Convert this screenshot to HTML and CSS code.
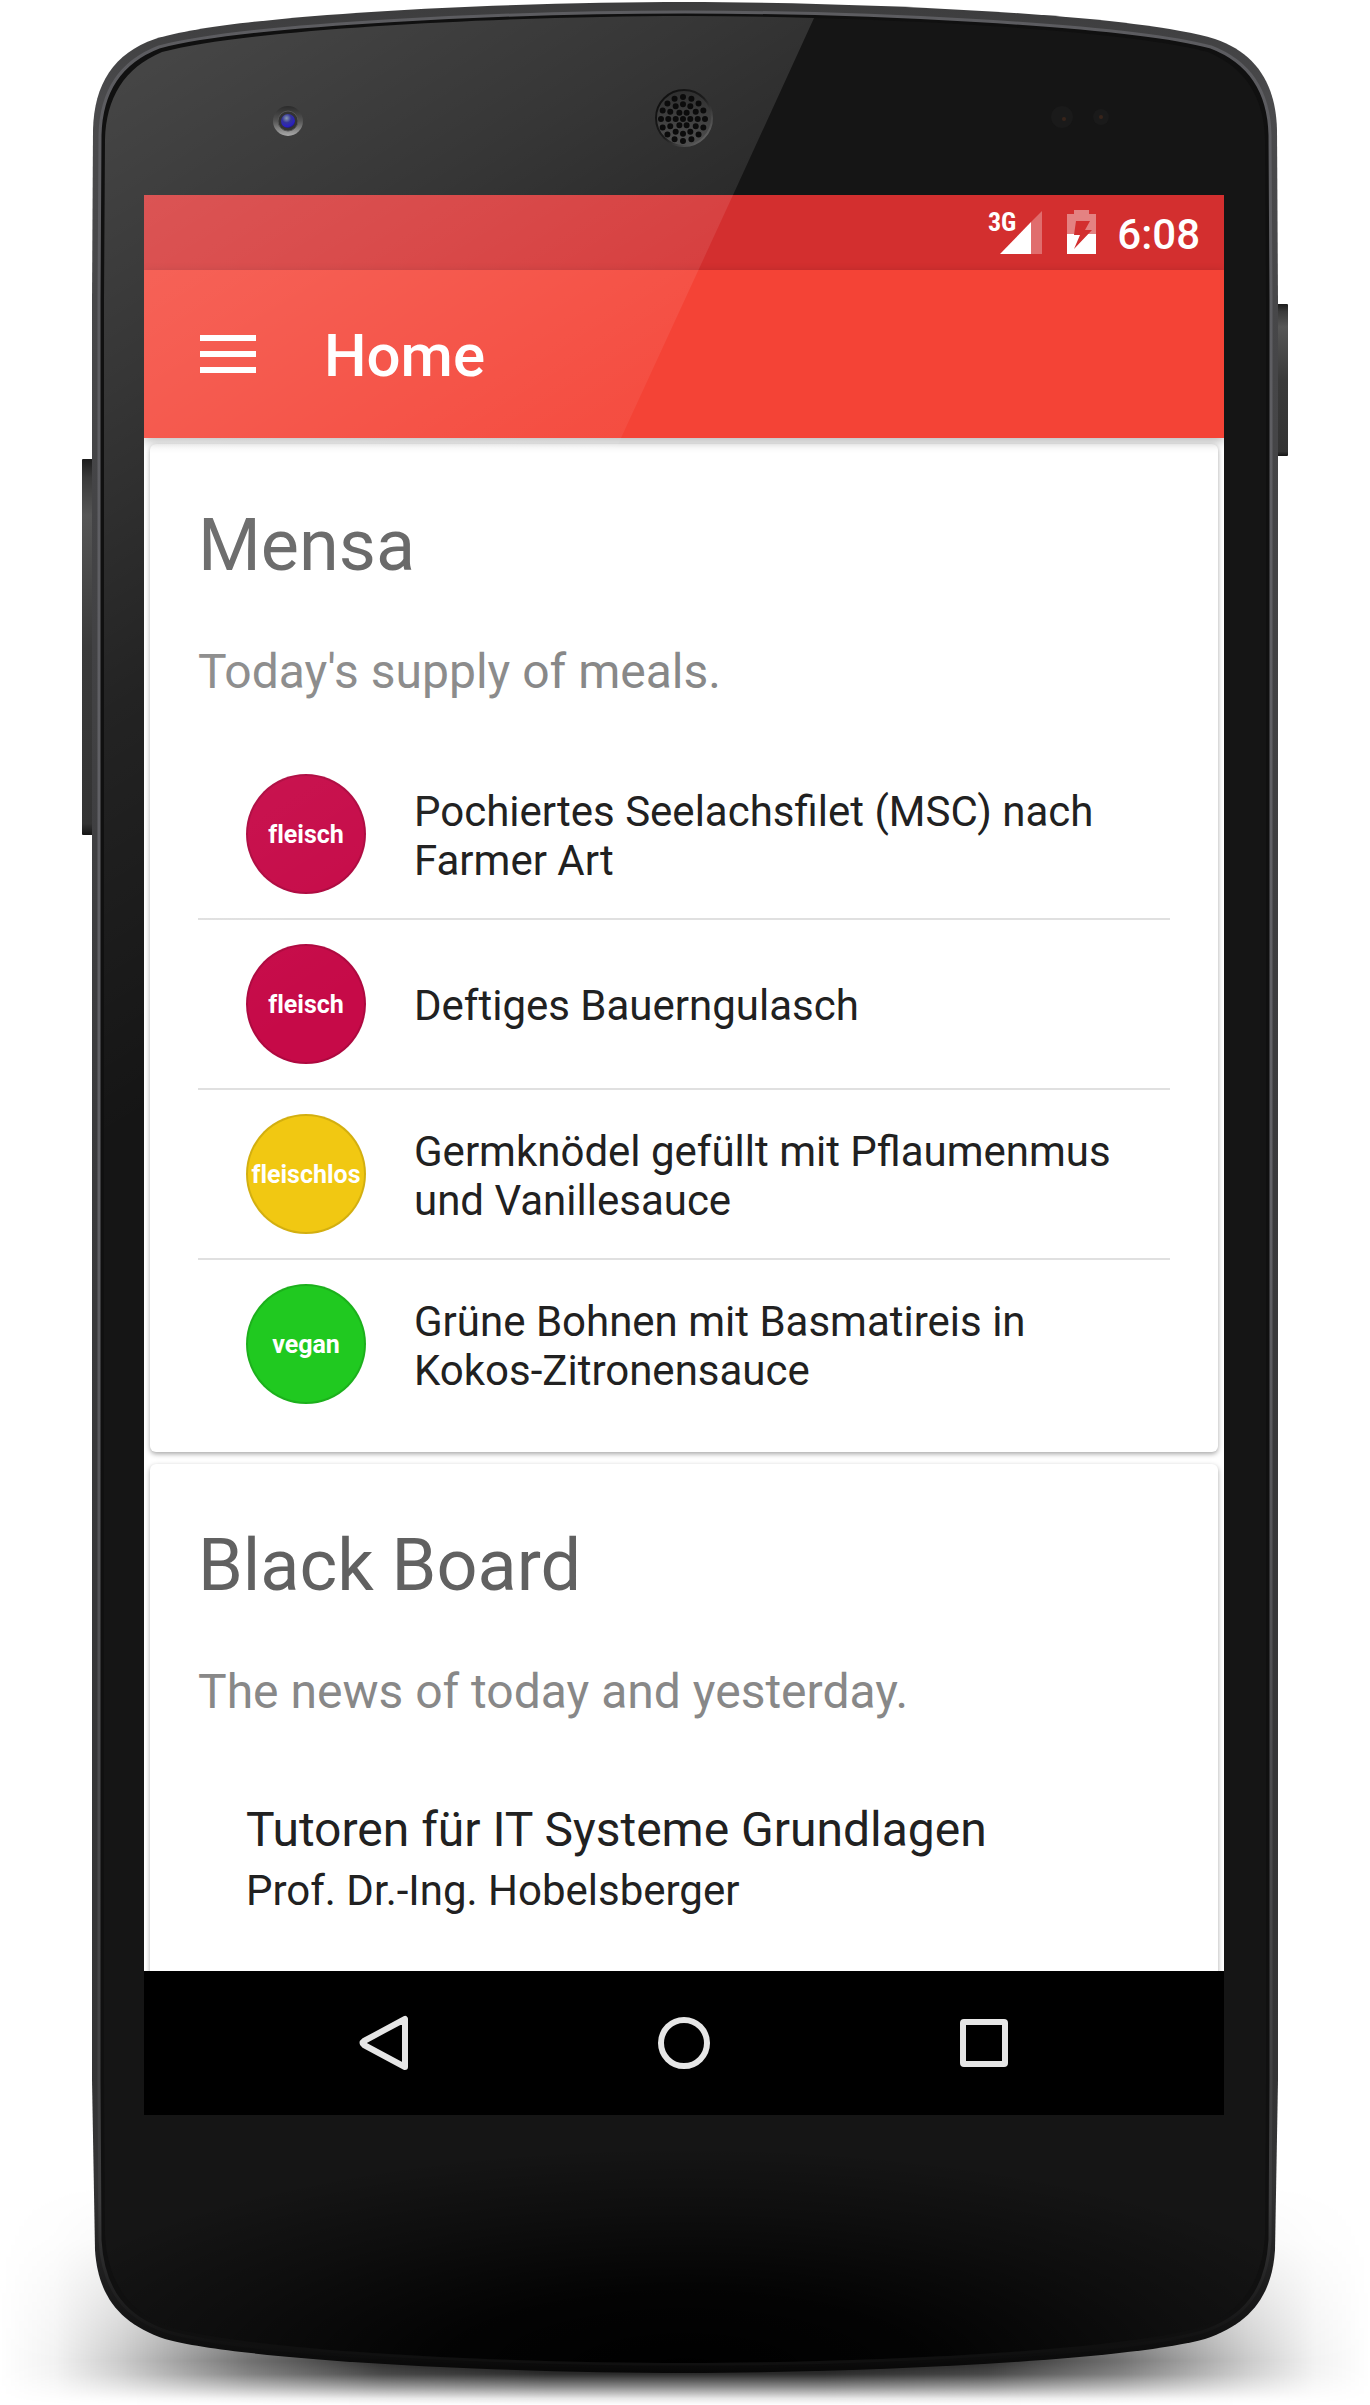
FILE: index.html
```
<!DOCTYPE html>
<html lang="en">
<head>
<meta charset="utf-8">
<meta name="viewport" content="width=device-width, initial-scale=1">
<title>Home</title>
<link rel="stylesheet" href="styles.css">
</head>
<body>
<div class="phone">
  <svg class="phone-layer" viewBox="0 0 1370 2405" preserveAspectRatio="none" aria-hidden="true">
    <defs>
      <linearGradient id="shadowX" x1="0" x2="1" y1="0" y2="0">
        <stop offset="0" stop-color="#000" stop-opacity="0"/>
        <stop offset=".04" stop-color="#000" stop-opacity=".05"/>
        <stop offset=".09" stop-color="#000" stop-opacity=".21"/>
        <stop offset=".18" stop-color="#000" stop-opacity=".55"/>
        <stop offset=".28" stop-color="#000" stop-opacity=".82"/>
        <stop offset=".4" stop-color="#000" stop-opacity=".95"/>
        <stop offset=".6" stop-color="#000" stop-opacity=".95"/>
        <stop offset=".72" stop-color="#000" stop-opacity=".82"/>
        <stop offset=".82" stop-color="#000" stop-opacity=".55"/>
        <stop offset=".91" stop-color="#000" stop-opacity=".21"/>
        <stop offset=".96" stop-color="#000" stop-opacity=".05"/>
        <stop offset="1" stop-color="#000" stop-opacity="0"/>
      </linearGradient>
      <linearGradient id="shadowY" x1="0" x2="0" y1="0" y2="1">
        <stop offset="0" stop-color="#000"/>
        <stop offset=".25" stop-color="#222"/>
        <stop offset=".6" stop-color="#aaa"/>
        <stop offset=".8" stop-color="#fff"/>
        <stop offset=".86" stop-color="#ddd"/>
        <stop offset=".92" stop-color="#777"/>
        <stop offset=".97" stop-color="#1a1a1a"/>
        <stop offset="1" stop-color="#000"/>
      </linearGradient>
      <mask id="shadowMask"><rect y="2185" width="1370" height="220" fill="url(#shadowY)"/></mask>
      <linearGradient id="rim" x1="0" x2="0" y1="0" y2="1">
        <stop offset="0" stop-color="#3c3c3d"/>
        <stop offset=".04" stop-color="#4a4a4c"/>
        <stop offset=".5" stop-color="#3a3a3c"/>
        <stop offset=".92" stop-color="#333334"/>
        <stop offset="1" stop-color="#080808"/>
      </linearGradient>
      <linearGradient id="rimLight" x1="0" x2="0" y1="0" y2="1">
        <stop offset="0" stop-color="#5c5c60"/>
        <stop offset=".5" stop-color="#626267"/>
        <stop offset=".93" stop-color="#3c3c3d"/>
        <stop offset="1" stop-color="#0a0a0a"/>
      </linearGradient>
      <radialGradient id="faceDark" gradientUnits="userSpaceOnUse" cx="685" cy="2370" r="700" gradientTransform="matrix(1 0 0 .32 0 1612)">
        <stop offset="0" stop-color="#000"/>
        <stop offset=".35" stop-color="#000" stop-opacity=".85"/>
        <stop offset=".7" stop-color="#000" stop-opacity=".35"/>
        <stop offset="1" stop-color="#000" stop-opacity="0"/>
      </radialGradient>
      <linearGradient id="key" x1="0" x2="0" y1="0" y2="1">
        <stop offset="0" stop-color="#1c1c1c"/>
        <stop offset=".05" stop-color="#3a3a3a"/>
        <stop offset=".15" stop-color="#565656"/>
        <stop offset=".5" stop-color="#3a3a3a"/>
        <stop offset=".97" stop-color="#333"/>
        <stop offset="1" stop-color="#151515"/>
      </linearGradient>
    </defs>
    <rect y="2185" width="1370" height="220" fill="url(#shadowX)" mask="url(#shadowMask)"/>
    <path d="M95 459H83a1 1 0 0 0-1 1V834a1 1 0 0 0 1 1H95Z" fill="url(#key)"/>
    <path d="M1275 304h12a1 1 0 0 1 1 1V455a1 1 0 0 1-1 1h-12Z" fill="url(#key)"/>
    <path d="M92 300 L93 130 C94 84 114 53 155 39 C240 13 520 2 685 2 S1130 13 1215 39 C1256 53 1276 84 1277 130 L1278 300 V2080 L1275 2250 C1272 2296 1250 2324 1205 2339 C1130 2360 870 2373 685 2373 S240 2360 165 2339 C120 2324 98 2296 95 2250 L92 2080Z" fill="url(#rim)"/>
    <path d="M99 300 L100 135 C101 92 120 62 159 47 C250 23 520 12 685 12 S1120 23 1211 47 C1250 62 1269 92 1270 135 L1271 300 V2080 L1270 2240 C1267 2290 1245 2318 1202 2332 C1120 2355 870 2367 685 2367 S250 2355 168 2332 C125 2318 103 2290 100 2240 L99 2080Z" fill="#101010" stroke="url(#rimLight)" stroke-width="3"/>
    <path d="M104 300 L105 140 C106 98 124 68 162 52 C250 28 520 16 685 16 S1120 28 1208 52 C1246 68 1264 98 1265 140 L1266 300 V2080 L1265 2235 C1262 2284 1240 2314 1200 2327 C1120 2351 870 2363 685 2363 S250 2351 170 2327 C130 2314 108 2284 105 2235 L104 2080Z" fill="#151515"/>
    <path d="M104 2080H1266L1265 2235 C1262 2284 1240 2314 1200 2327 C1120 2351 870 2363 685 2363 S250 2351 170 2327 C130 2314 108 2284 105 2235Z" fill="url(#faceDark)"/>
    <circle cx="1062" cy="117" r="11" fill="#1a1a1a"/><circle cx="1064" cy="119" r="2" fill="#38241a"/>
    <circle cx="1101" cy="117" r="8" fill="#1a1a1a"/><circle cx="1101" cy="117" r="2" fill="#38241a"/>
  </svg>

  <div class="screen">
    <header class="status-bar">
      <span class="network">3G</span>
      <svg class="signal" viewBox="0 0 42 43" aria-hidden="true">
        <path d="M42 0V43H31V11Z" fill="#fff" fill-opacity=".3"/>
        <path d="M31 11V43H0Z" fill="#fff"/>
      </svg>
      <svg class="battery" viewBox="0 0 29 44" aria-hidden="true">
        <path d="M7 0H22V4H29V24H0V4H7Z" fill="#fff" fill-opacity=".4"/>
        <path d="M0 24H29V44H0Z" fill="#fff"/>
        <path d="M9 11H23L18 20H25L7 39L13 25H7Z" fill="#d32f2f"/>
      </svg>
      <time class="clock">6:08</time>
    </header>

    <div class="app-bar">
      <button class="menu-button" type="button" aria-label="Open navigation">
        <svg viewBox="0 0 56 38" aria-hidden="true"><path d="M0 0H56V6H0ZM0 16H56V22H0ZM0 32H56V38H0Z" fill="#fff"/></svg>
      </button>
      <h1 class="app-title">Home</h1>
    </div>

    <main class="content">
      <section class="card">
        <h2 class="card-title">Mensa</h2>
        <p class="card-subtitle">Today's supply of meals.</p>
        <ul class="list">
          <li class="meal"><span class="badge badge-meat">fleisch</span><span class="meal-name">Pochiertes Seelachsfilet (MSC) nach Farmer Art</span></li>
          <li class="meal"><span class="badge badge-meat">fleisch</span><span class="meal-name">Deftiges Bauerngulasch</span></li>
          <li class="meal"><span class="badge badge-meatless">fleischlos</span><span class="meal-name">Germknödel gefüllt mit Pflaumenmus und Vanillesauce</span></li>
          <li class="meal"><span class="badge badge-vegan">vegan</span><span class="meal-name">Grüne Bohnen mit Basmatireis in Kokos-Zitronensauce</span></li>
        </ul>
      </section>
      <section class="card">
        <h2 class="card-title">Black Board</h2>
        <p class="card-subtitle">The news of today and yesterday.</p>
        <ul class="list">
          <li class="news">
            <h3 class="news-title">Tutoren für IT Systeme Grundlagen</h3>
            <p class="news-author">Prof. Dr.-Ing. Hobelsberger</p>
          </li>
        </ul>
      </section>
    </main>

    <nav class="nav-bar" aria-label="System navigation">
      <button class="nav-button" type="button" aria-label="Back">
        <svg viewBox="0 0 56 56" aria-hidden="true"><path d="M49 4V52L8 30Q5 28 8 26Z" fill="none" stroke="#e6e6e6" stroke-width="6" stroke-linejoin="round"/></svg>
      </button>
      <button class="nav-button" type="button" aria-label="Home">
        <svg viewBox="0 0 56 56" aria-hidden="true"><circle cx="28" cy="28" r="23" fill="none" stroke="#e6e6e6" stroke-width="6"/></svg>
      </button>
      <button class="nav-button" type="button" aria-label="Recent apps">
        <svg viewBox="0 0 56 56" aria-hidden="true"><rect x="7" y="7" width="42" height="42" rx="1" fill="none" stroke="#e6e6e6" stroke-width="6" stroke-linejoin="round"/></svg>
      </button>
    </nav>
  </div>

  <svg class="phone-layer phone-gloss" viewBox="0 0 1370 2405" preserveAspectRatio="none" aria-hidden="true">
    <defs>
      <linearGradient id="gloss" gradientUnits="userSpaceOnUse" x1="95" y1="80" x2="570" y2="860">
        <stop offset="0" stop-color="#fff" stop-opacity=".21"/>
        <stop offset=".3" stop-color="#fff" stop-opacity=".14"/>
        <stop offset=".6" stop-color="#fff" stop-opacity=".06"/>
        <stop offset="1" stop-color="#fff" stop-opacity="0"/>
      </linearGradient>
      <linearGradient id="ring" x1="0" x2="0" y1="0" y2="1">
        <stop offset="0" stop-color="#2b2b2b"/>
        <stop offset=".5" stop-color="#555"/>
        <stop offset="1" stop-color="#aaa"/>
      </linearGradient>
      <radialGradient id="lens" cx=".4" cy=".3" r=".8">
        <stop offset="0" stop-color="#8a9cae"/>
        <stop offset=".4" stop-color="#34349a"/>
        <stop offset=".75" stop-color="#2a20c0"/>
        <stop offset="1" stop-color="#181830"/>
      </radialGradient>
      <linearGradient id="grille" x1="0" x2="1" y1="0" y2="1">
        <stop offset="0" stop-color="#0c0c0c"/>
        <stop offset=".5" stop-color="#1c1c1c"/>
        <stop offset="1" stop-color="#777"/>
      </linearGradient>
      <linearGradient id="grilleFill" x1="0" x2="0" y1="0" y2="1">
        <stop offset="0" stop-color="#2e2e2e"/>
        <stop offset="1" stop-color="#505050"/>
      </linearGradient>
    </defs>
    <path d="M104 300 L105 140 C106 98 124 68 162 52 C250 28 520 16 685 16 Q750 16 814 18 L733 195 L621 438 L104 1560Z" fill="url(#gloss)"/>
    <circle cx="288" cy="121" r="15" fill="url(#ring)"/>
    <circle cx="288" cy="121" r="10" fill="#333" stroke="#555" stroke-width="1"/>
    <circle cx="288" cy="121" r="7" fill="url(#lens)"/>
    <circle cx="684" cy="118" r="28" fill="url(#grilleFill)" stroke="url(#grille)" stroke-width="2"/>
    <g fill="none" stroke="#0b0b0b" stroke-width="6" stroke-linecap="round">
      <circle cx="683" cy="119" r="22" pathLength="16" stroke-dasharray="0 1"/>
      <circle cx="683" cy="119" r="14.7" pathLength="12" stroke-dasharray="0 1"/>
      <circle cx="683" cy="119" r="7.3" pathLength="6" stroke-dasharray="0 1"/>
    </g>
    <circle cx="683" cy="119" r="3" fill="#0b0b0b"/>
  </svg>
</div>
</body>
</html>
```
FILE: styles.css
```
* {
  box-sizing: border-box;
}

body {
  margin: 0;
  background: #fff;
  color: #212121;
  font-family: Roboto, "Liberation Sans", sans-serif;
}

h1, h2, h3, p, ul {
  margin: 0;
  padding: 0;
  font-weight: 400;
}

button {
  padding: 0;
  border: 0;
  background: none;
}

button svg {
  display: block;
  width: 100%;
}

/* Device frame */

.phone {
  position: relative;
  padding: 195px 146px 290px 144px;
}

.phone-layer {
  position: absolute;
  inset: 0;
  width: 100%;
  height: 100%;
}

.phone-gloss {
  z-index: 2;
  pointer-events: none;
}

.screen {
  position: relative;
  display: flex;
  flex-direction: column;
  aspect-ratio: 9 / 16;
  overflow: hidden;
  background: #fff;
}

/* Status bar */

.status-bar {
  display: flex;
  flex: none;
  align-items: flex-end;
  justify-content: flex-end;
  height: 75px;
  padding: 0 24px 16px;
  background: #d32f2f;
  color: #fff;
}

.network {
  align-self: flex-start;
  margin: 14px -16px 0 0;
  font-family: "Roboto Condensed", Roboto, sans-serif;
  font-size: 26px;
  font-weight: 700;
  line-height: 26px;
}

.signal {
  width: 42px;
  height: 43px;
}

.battery {
  width: 29px;
  height: 44px;
  margin: 0 21px 0 25px;
}

.clock {
  padding-top: 4px;
  font-size: 42px;
  font-weight: 500;
  line-height: 38px;
}

/* App bar */

.app-bar {
  z-index: 1;
  display: flex;
  flex: none;
  align-items: center;
  gap: 68px;
  height: 168px;
  padding: 0 56px;
  background: #f44336;
  box-shadow: 0 4px 10px rgba(0, 0, 0, .28);
  color: #fff;
}

.menu-button {
  width: 56px;
}

.app-title {
  padding-top: 4px;
  font-size: 60px;
  font-weight: 500;
  line-height: 72px;
}

/* Cards */

.content {
  display: flex;
  flex: 1;
  flex-direction: column;
  gap: 12px;
  min-height: 0;
  padding: 6px;
  overflow: hidden;
}

.card {
  flex: none;
  padding: 60px 48px 24px;
  border-radius: 6px;
  background: #fff;
  box-shadow: 0 2px 5px rgba(0, 0, 0, .35);
}

.card-title {
  margin-bottom: 56px;
  color: #616161;
  font-size: 72px;
  line-height: 84px;
}

.card-subtitle {
  margin-bottom: 50px;
  color: #888;
  font-size: 48px;
  line-height: 56px;
}

.list {
  list-style: none;
}

.meal {
  display: flex;
  align-items: center;
  gap: 48px;
  padding: 24px 48px;
}

.meal + .meal {
  border-top: 2px solid #e0e0e0;
}

.meal-name {
  padding-top: 3px;
  font-size: 42px;
  line-height: 49px;
}

.badge {
  display: flex;
  flex: none;
  align-items: center;
  justify-content: center;
  width: 120px;
  height: 120px;
  border: 2px solid rgba(0, 0, 0, .12);
  border-radius: 50%;
  color: #fff;
  font-size: 25px;
  font-variant-ligatures: none;
  font-weight: 700;
}

.badge-meat {
  background-color: #c60a48;
}

.badge-meatless {
  background-color: #f1c812;
}

.badge-vegan {
  background-color: #20c920;
}

.news {
  padding: 32px 48px 60px;
}

.news-title {
  margin-bottom: 8px;
  font-size: 48px;
  line-height: 56px;
}

.news-author {
  font-size: 42px;
  line-height: 49px;
}

/* System navigation */

.nav-bar {
  z-index: 1;
  display: flex;
  flex: none;
  align-items: center;
  justify-content: center;
  gap: 244px;
  height: 144px;
  background: #000;
}

.nav-button {
  width: 56px;
}
```
